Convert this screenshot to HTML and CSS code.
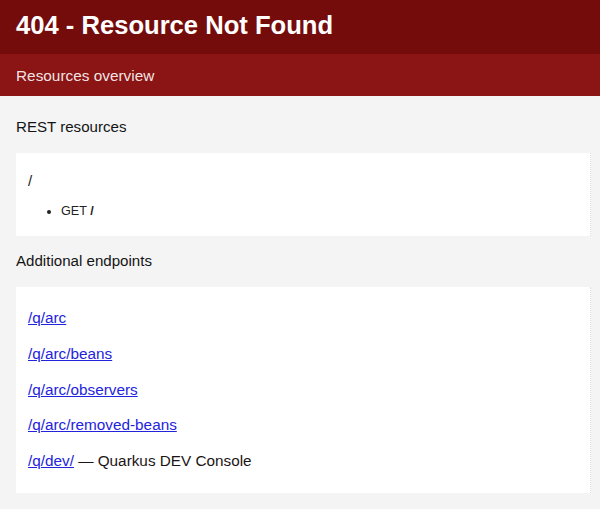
FILE: index.html
```html
<!DOCTYPE html>
<html lang="en">
<head>
<meta charset="utf-8">
<title>404 - Resource Not Found</title>
<link rel="stylesheet" href="styles.css">
</head>
<body>
<header class="header">
  <h1 class="title">404 - Resource Not Found</h1>
</header>
<div class="subheader">
  <h2 class="subtitle">Resources overview</h2>
</div>
<main class="content">
  <h3 class="section-title">REST resources</h3>
  <div class="box box-resources">
    <div class="path">/</div>
    <ul class="methods">
      <li>GET <span class="slash">/</span></li>
    </ul>
  </div>
  <h3 class="section-title">Additional endpoints</h3>
  <div class="box box-endpoints">
    <p class="endpoint"><a href="#">/q/arc</a></p>
    <p class="endpoint"><a href="#">/q/arc/beans</a></p>
    <p class="endpoint"><a href="#">/q/arc/observers</a></p>
    <p class="endpoint"><a href="#">/q/arc/removed-beans</a></p>
    <p class="endpoint"><a href="#">/q/dev/</a> — Quarkus DEV Console</p>
  </div>
</main>
</body>
</html>
```
FILE: styles.css
```css
html, body {
  margin: 0;
  padding: 0;
}
body {
  background: #f4f4f4;
  font-family: "Liberation Sans", Arial, Helvetica, sans-serif;
  color: #222;
}
.header {
  background: #750c0c;
  padding: 10px 0 14px 16px;
}
.title {
  margin: 0;
  font-size: 25.6px;
  line-height: 30px;
  font-weight: 700;
  color: #fff;
}
.subheader {
  background: #8b1515;
  padding: 12px 0 10px 16px;
}
.subtitle {
  margin: 0;
  font-size: 15.36px;
  line-height: 20px;
  font-weight: 400;
  color: rgba(255, 255, 255, 0.9);
}
.content {
  padding: 20px 9px 0 16px;
}
.section-title {
  margin: 0 0 16px;
  font-size: 15.1px;
  line-height: 21px;
  font-weight: 400;
  color: #141414;
}
.box {
  background: #fff;
  border-right: 1px dotted #dcdcdc;
  padding: 6px 12px;
  margin-bottom: 14px;
}
.path {
  margin-top: 12px;
  font-size: 15px;
  line-height: 20px;
}
.methods {
  margin: 10px 0 9px;
  padding-left: 33px;
  font-size: 12.6px;
  line-height: 20px;
}
.slash {
  font-weight: 700;
}
.endpoint {
  margin: 15px 0;
  font-size: 15.3px;
  line-height: 20.8px;
  color: #1c1414;
}
.endpoint a {
  color: #2323dc;
  text-decoration: underline;
}
```
